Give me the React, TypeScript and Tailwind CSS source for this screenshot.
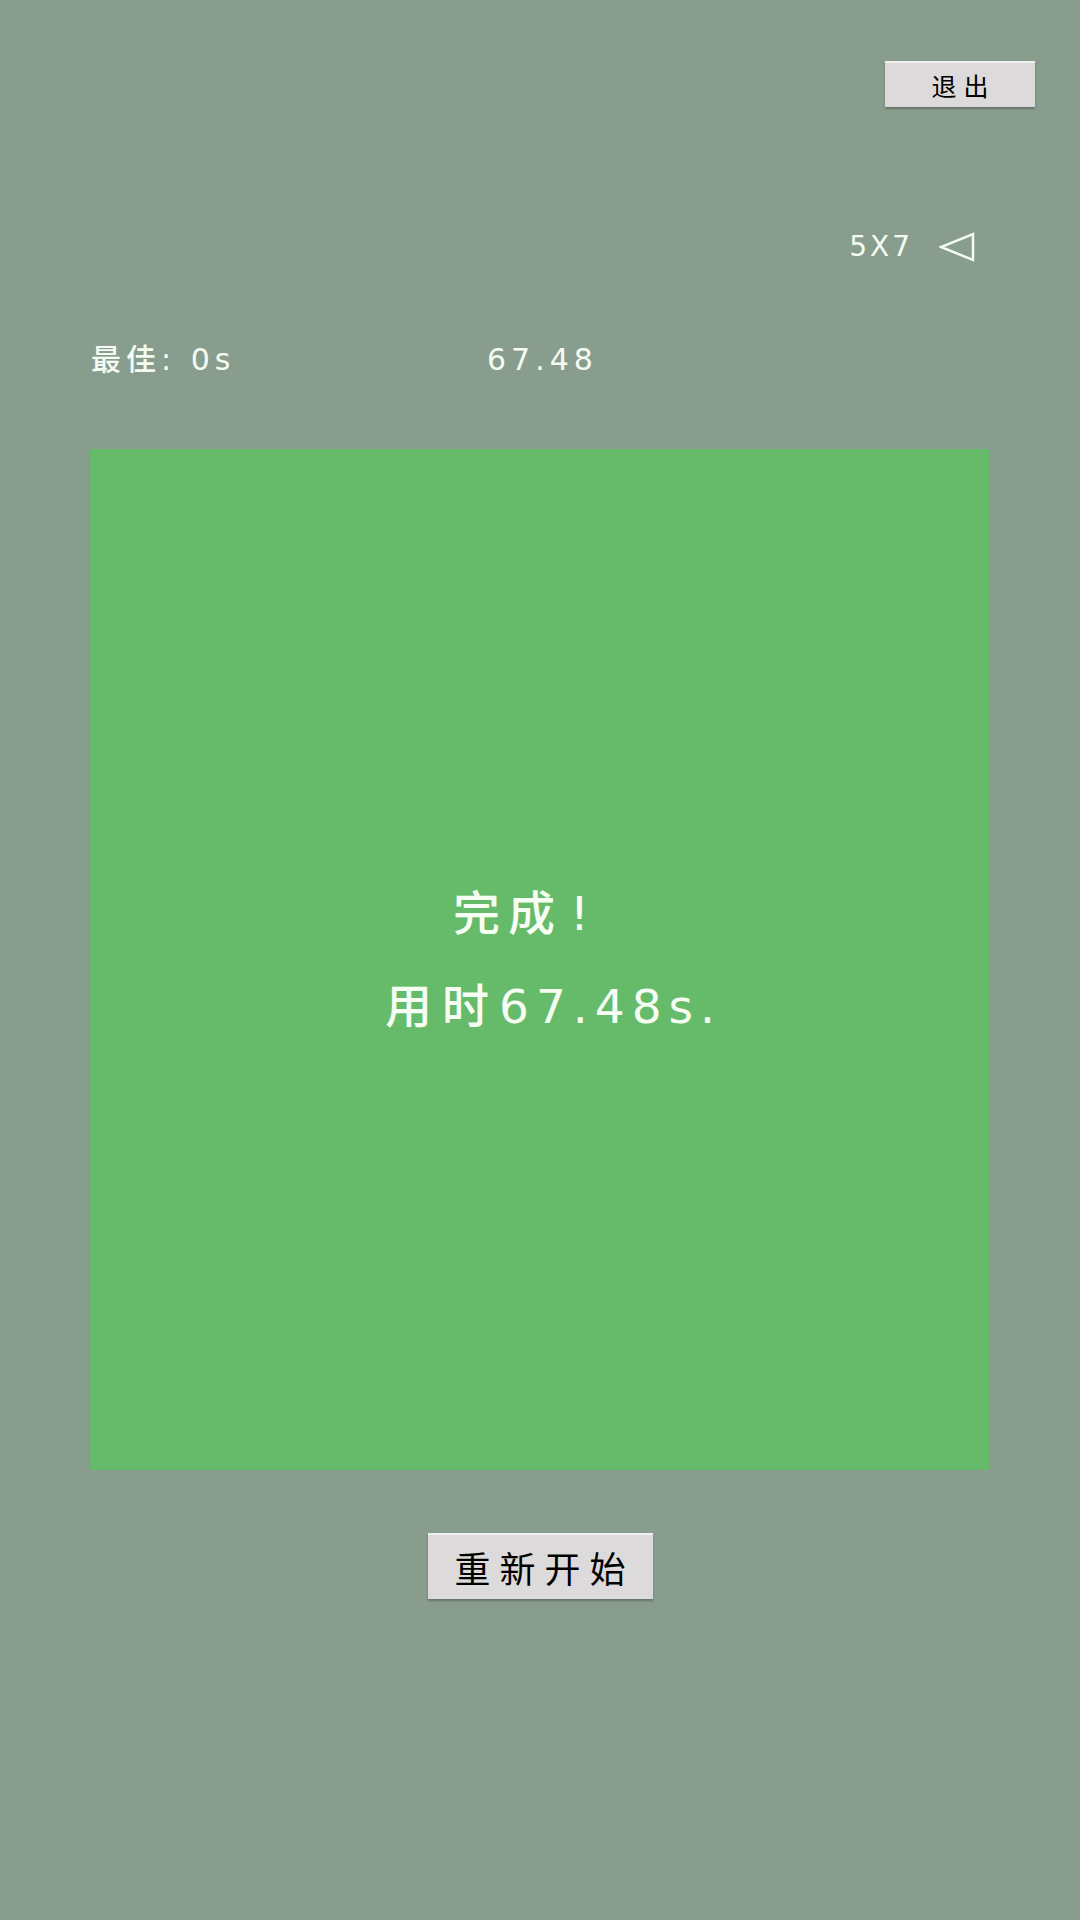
import React from "react";

export default function App() {
  const font = { fontFamily: '"DejaVu Sans", "Noto Sans CJK SC", sans-serif' };
  const cjk = { fontFamily: '"Noto Sans CJK SC", sans-serif' };
  return (
    <div
      className="w-[1080px] h-[1920px] bg-[#889d8d] flex flex-col overflow-hidden"
      style={font}
    >
      <div className="flex justify-end pt-[61px] pr-[45px]">
        <button
          className="w-[150px] h-[46px] bg-[#dcdada] border-t-2 border-t-[#eef1ee] shadow-[0_2px_2px_rgba(0,0,0,0.25)] text-[25px] leading-none text-black tracking-[7px] pl-[7px] flex items-center justify-center"
          style={cjk}
        >
          退出
        </button>
      </div>

      <div className="flex justify-end items-center pr-[105px] mt-[120px] h-[40px]">
        <span className="text-[28px] leading-none text-[#f4fbf2] tracking-[3px]">5X7</span>
        <svg
          className="ml-[26px]"
          width="36"
          height="30"
          viewBox="0 0 36 30"
          fill="none"
        >
          <path
            d="M34 2 L34 28 L2 15 Z"
            stroke="#f4fbf2"
            strokeWidth="2.5"
            strokeLinejoin="miter"
          />
        </svg>
      </div>

      <div className="flex items-center h-[40px] mt-[73px] text-[#f4fbf2] text-[30px] leading-none">
        <span className="ml-[91px] w-[396px] tracking-[5px]">
          <span className="font-medium">最佳</span>: 0s
        </span>
        <span className="tracking-[5px]">67.48</span>
      </div>

      <div className="ml-[90px] mt-[69px] w-[899px] h-[1021px] bg-[#66bb6a] flex flex-col items-start pt-[441px] text-[#f6fdf2]">
        <div className="ml-[363px] text-[47px] leading-none">
          <span className="font-medium tracking-[8px]">完</span>
          <span className="font-medium tracking-[15px]">成</span>
          <span>!</span>
        </div>
        <div className="ml-[295px] mt-[46px] text-[47px] leading-none">
          <span className="font-medium tracking-[10px]">用时</span>
          <span className="tracking-[7px]">67.48s.</span>
        </div>
      </div>

      <div className="flex justify-center mt-[63px]">
        <button
          className="w-[225px] h-[66px] bg-[#dcdada] border-t-2 border-t-[#eef1ee] shadow-[0_2px_2px_rgba(0,0,0,0.25)] text-[36px] leading-none text-black tracking-[9px] pl-[9px] flex items-center justify-center"
          style={cjk}
        >
          重新开始
        </button>
      </div>
    </div>
  );
}
